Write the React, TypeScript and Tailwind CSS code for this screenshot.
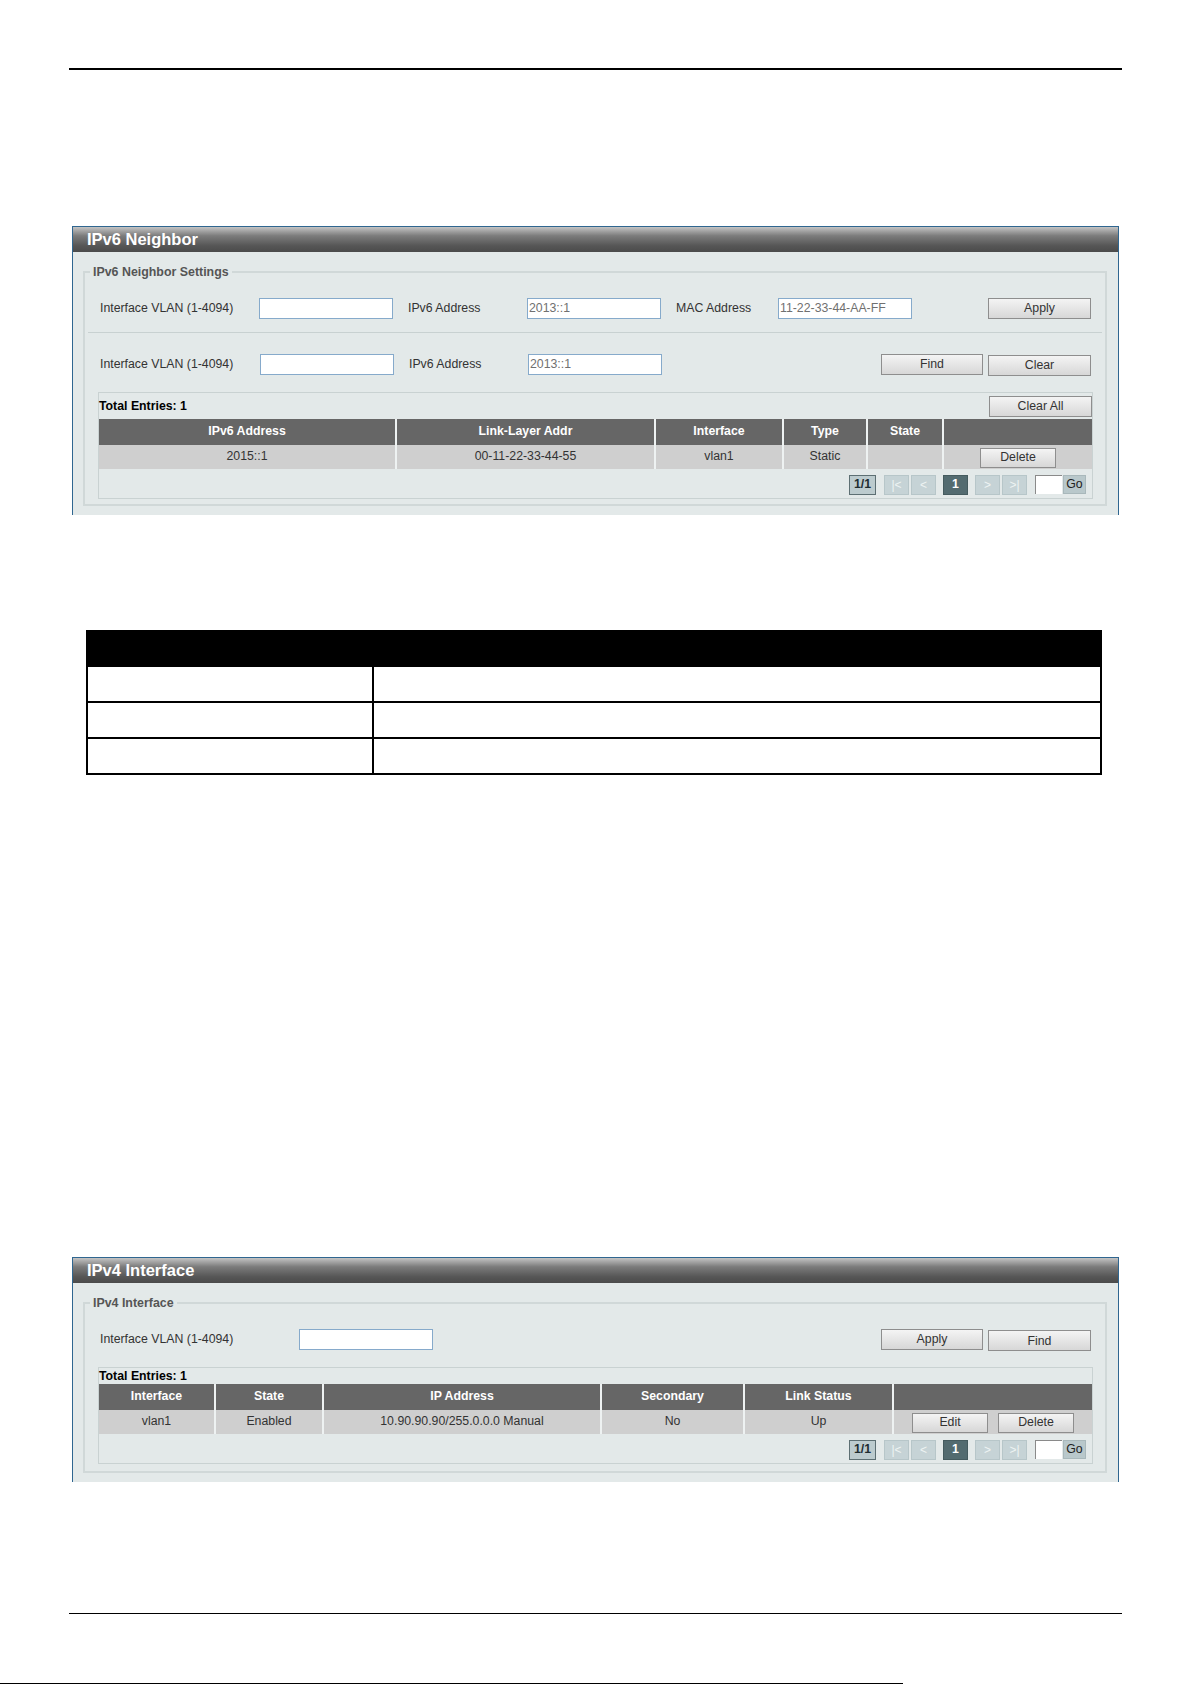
import React from 'react';

const cell = 'border-l-2 border-[#eef2f2] first:border-l-0 text-center';

function Button({ w, h = 'h-[21px]', children }: { w: string; h?: string; children: React.ReactNode }) {
  return (
    <button
      type="button"
      className={`${w} ${h} shrink-0 border border-[#8e8e8e] bg-[linear-gradient(#f4f4f4,#d7d7d7)] text-[12.3px] leading-none text-[#333]`}
    >
      {children}
    </button>
  );
}

function Field({ value = '', w = 'w-[134px]' }: { value?: string; w?: string }) {
  return (
    <input
      readOnly
      value={value}
      className={`${w} h-[21px] shrink-0 border border-[#86aacb] bg-white px-[1px] text-[12.3px] text-[#707070] outline-none`}
    />
  );
}

function Label({ w, children }: { w: string; children: React.ReactNode }) {
  return <span className={`${w} shrink-0 text-[12.3px] text-[#333]`}>{children}</span>;
}

function Pager() {
  const nav = 'h-[20px] w-[25px] flex items-center justify-center border border-[#b7c6c9] bg-[#c6d3d6] text-[12px] text-[#eef3f3]';
  return (
    <div className="flex items-center justify-end pr-[6px] text-[12.3px]">
      <span className="flex h-[20px] w-[27px] items-center justify-center border border-[#5d6f73] bg-[#bccbce] font-bold text-[#1e2d31]">
        1/1
      </span>
      <div className="ml-[8px] flex gap-[2px]">
        <span className={nav}>|&lt;</span>
        <span className={nav}>&lt;</span>
      </div>
      <span className="ml-[7px] flex h-[20px] w-[25px] items-center justify-center border border-[#455b5f] bg-[#536b70] font-bold text-white">
        1
      </span>
      <div className="ml-[7px] flex gap-[2px]">
        <span className={nav}>&gt;</span>
        <span className={nav}>&gt;|</span>
      </div>
      <div className="ml-[8px] flex items-end">
        <span className="h-[19px] w-[27px] border-l border-t border-[#8a8a8a] bg-white" />
        <span className="ml-[1px] flex h-[19px] w-[23px] items-center justify-center border border-[#a9b8bb] bg-[#b9c8cb] text-[#222]">
          Go
        </span>
      </div>
    </div>
  );
}

function Panel({ title, legend, children, top }: { title: string; legend: string; children: React.ReactNode; top: string }) {
  return (
    <section className={`${top} ml-[72px] w-[1047px] border border-b-0 border-[#2f6690] bg-[#e3e9e9]`}>
      <div className="h-[25px] bg-[linear-gradient(#c4c4c4,#7c7c7c_35%,#565656_75%,#4b4b4b)] pl-[14px] text-[16.5px] font-bold leading-[25px] text-white">
        {title}
      </div>
      <div className="pl-[10px] pr-[11px] pt-[13px] pb-[9px]">
        <fieldset className="border-2 border-[#d0d8d8] px-0">
          <legend className="ml-[5px] px-[3px] text-[12.4px] font-bold leading-[14px] text-[#555]">{legend}</legend>
          {children}
        </fieldset>
      </div>
    </section>
  );
}

export default function App() {
  return (
    <div className="flex h-[1684px] w-[1192px] flex-col overflow-hidden bg-white font-['Liberation_Sans',Arial,sans-serif]">
      <div className="ml-[69px] mt-[68px] h-[2px] w-[1053px] bg-black" />

      <Panel top="mt-[156px]" title="IPv6 Neighbor" legend="IPv6 Neighbor Settings">
        <div className="mt-[19px] flex h-[21px] items-center pl-[15px] pr-[14px]">
          <Label w="w-[159px]">Interface VLAN (1-4094)</Label>
          <Field />
          <Label w="ml-[15px] w-[119px]">IPv6 Address</Label>
          <Field value="2013::1" />
          <Label w="ml-[15px] w-[102px]">MAC Address</Label>
          <Field value="11-22-33-44-AA-FF" />
          <div className="flex-1" />
          <Button w="w-[103px]">Apply</Button>
        </div>
        <div className="mx-[3px] mt-[13px] h-[1px] bg-[#c8d1d1]" />
        <div className="mt-[21px] flex h-[21px] items-center pl-[15px] pr-[14px]">
          <Label w="w-[160px]">Interface VLAN (1-4094)</Label>
          <Field />
          <Label w="ml-[15px] w-[119px]">IPv6 Address</Label>
          <Field value="2013::1" />
          <div className="flex-1" />
          <Button w="w-[102px]">Find</Button>
          <div className="ml-[5px]">
            <Button w="w-[103px]">Clear</Button>
          </div>
        </div>
        <div className="ml-[13px] mr-[12px] mt-[17px] mb-[5px] border border-[#c9d2d2] pb-[3px]">
          <div className="flex items-center justify-between pt-[3px] pb-[2px]">
            <span className="text-[12.3px] font-bold text-black">Total Entries: 1</span>
            <Button w="w-[103px]">Clear All</Button>
          </div>
          <table className="w-full table-fixed border-collapse text-[12.3px]">
            <colgroup>
              <col className="w-[297px]" />
              <col className="w-[259px]" />
              <col className="w-[128px]" />
              <col className="w-[84px]" />
              <col className="w-[76px]" />
              <col />
            </colgroup>
            <thead>
              <tr className="h-[26px] bg-[#666] font-bold text-white">
                <th className={cell}>IPv6 Address</th>
                <th className={cell}>Link-Layer Addr</th>
                <th className={cell}>Interface</th>
                <th className={cell}>Type</th>
                <th className={cell}>State</th>
                <th className={cell}></th>
              </tr>
            </thead>
            <tbody>
              <tr className="h-[24px] bg-[#cfcfcf] text-[#333]">
                <td className={cell}>2015::1</td>
                <td className={cell}>00-11-22-33-44-55</td>
                <td className={cell}>vlan1</td>
                <td className={cell}>Static</td>
                <td className={cell}></td>
                <td className={cell}>
                  <div className="flex justify-center pt-[2px]">
                    <Button w="w-[76px]" h="h-[20px]">Delete</Button>
                  </div>
                </td>
              </tr>
            </tbody>
          </table>
          <div className="mt-[6px]">
            <Pager />
          </div>
        </div>
      </Panel>

      <div className="ml-[86px] mt-[115px] w-[1016px] border-2 border-black">
        <div className="h-[35px] bg-black" />
        <div className="flex h-[34px]">
          <div className="w-[286px] border-r-2 border-black" />
          <div className="flex-1" />
        </div>
        <div className="flex h-[36px] border-t-2 border-black">
          <div className="w-[286px] border-r-2 border-black" />
          <div className="flex-1" />
        </div>
        <div className="flex h-[36px] border-t-2 border-black">
          <div className="w-[286px] border-r-2 border-black" />
          <div className="flex-1" />
        </div>
      </div>

      <Panel top="mt-[482px]" title="IPv4 Interface" legend="IPv4 Interface">
        <div className="mt-[20px] flex h-[20px] items-center pl-[15px] pr-[14px]">
          <Label w="w-[199px]">Interface VLAN (1-4094)</Label>
          <Field />
          <div className="flex-1" />
          <Button w="w-[102px]">Apply</Button>
          <div className="ml-[5px]">
            <Button w="w-[103px]">Find</Button>
          </div>
        </div>
        <div className="ml-[13px] mr-[12px] mt-[17px] mb-[7px] border border-[#c9d2d2] pb-[3px]">
          <div className="h-[16px] text-[12.3px] font-bold leading-[17px] text-black">Total Entries: 1</div>
          <table className="w-full table-fixed border-collapse text-[12.3px]">
            <colgroup>
              <col className="w-[116px]" />
              <col className="w-[108px]" />
              <col className="w-[278px]" />
              <col className="w-[143px]" />
              <col className="w-[149px]" />
              <col />
            </colgroup>
            <thead>
              <tr className="h-[26px] bg-[#666] font-bold text-white">
                <th className={cell}>Interface</th>
                <th className={cell}>State</th>
                <th className={cell}>IP Address</th>
                <th className={cell}>Secondary</th>
                <th className={cell}>Link Status</th>
                <th className={cell}></th>
              </tr>
            </thead>
            <tbody>
              <tr className="h-[24px] bg-[#cfcfcf] text-[#333]">
                <td className={cell}>vlan1</td>
                <td className={cell}>Enabled</td>
                <td className={cell}>10.90.90.90/255.0.0.0 Manual</td>
                <td className={cell}>No</td>
                <td className={cell}>Up</td>
                <td className={cell}>
                  <div className="flex justify-center gap-[10px] pt-[2px]">
                    <Button w="w-[76px]" h="h-[20px]">Edit</Button>
                    <Button w="w-[76px]" h="h-[20px]">Delete</Button>
                  </div>
                </td>
              </tr>
            </tbody>
          </table>
          <div className="mt-[6px]">
            <Pager />
          </div>
        </div>
      </Panel>

      <div className="ml-[69px] mt-[131px] h-[2px] w-[1053px] bg-black" />
      <div className="mt-[69px] h-[1px] w-[903px] bg-black" />
    </div>
  );
}
